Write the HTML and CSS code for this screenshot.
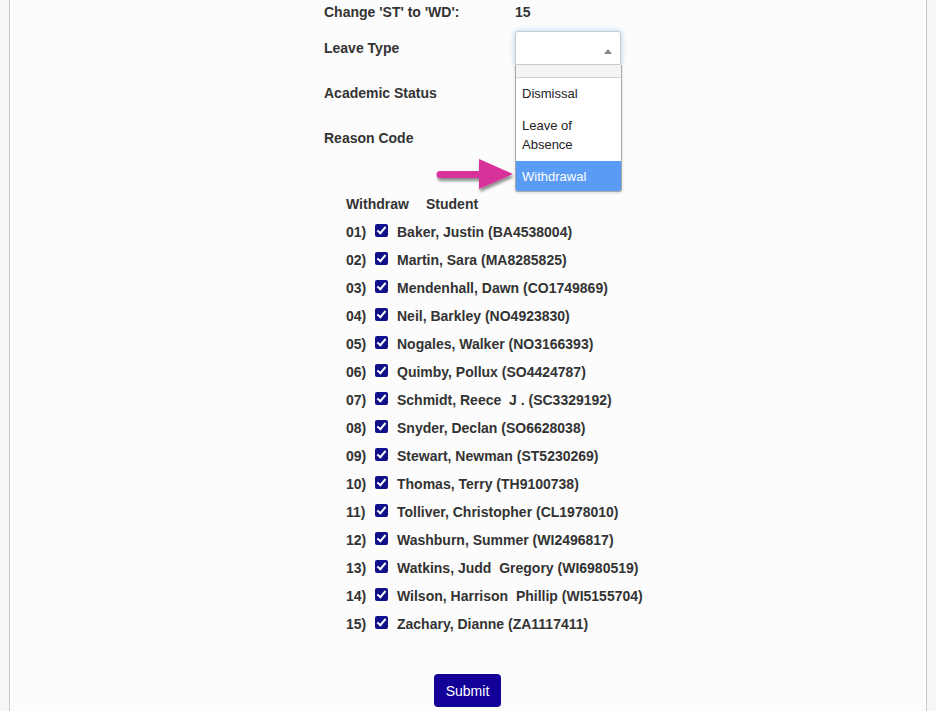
FILE: index.html
```html
<!DOCTYPE html>
<html>
<head>
<meta charset="utf-8">
<link rel="stylesheet" href="styles.css">
</head>
<body>
<div class="panel">
  <div class="form">
    <div class="row row-first">
      <div class="label">Change 'ST' to 'WD':</div>
      <div class="value">15</div>
    </div>
    <div class="row">
      <div class="label">Leave Type</div>
      <div class="select-wrap">
        <div class="select"><span class="caret"></span></div>
        <div class="options">
          <div class="opt opt-empty"></div>
          <div class="opt">Dismissal</div>
          <div class="opt">Leave of Absence</div>
          <div class="opt opt-sel">Withdrawal</div>
        </div>
        <svg class="pointer" width="84" height="40" viewBox="0 0 84 40">
          <defs>
            <filter id="sh" x="-20%" y="-30%" width="140%" height="170%">
              <feGaussianBlur in="SourceAlpha" stdDeviation="1.5"/>
              <feOffset dx="1" dy="3" result="b"/>
              <feComponentTransfer><feFuncA type="linear" slope="0.45"/></feComponentTransfer>
              <feMerge><feMergeNode/><feMergeNode in="SourceGraphic"/></feMerge>
            </filter>
          </defs>
          <path filter="url(#sh)" fill="#d8309a" d="M6 13 H45 V1 L79 16 L45 31 V20 H6 A3.5 3.5 0 0 1 6 13 Z"/>
        </svg>
      </div>
    </div>
    <div class="row">
      <div class="label">Academic Status</div>
    </div>
    <div class="row">
      <div class="label">Reason Code</div>
    </div>

    <div class="students">
      <div class="head"><span class="h1">Withdraw</span><span>Student</span></div>
      <div class="st"><span class="num">01)</span><span class="cb"></span><span>Baker, Justin (BA4538004)</span></div>
      <div class="st"><span class="num">02)</span><span class="cb"></span><span>Martin, Sara (MA8285825)</span></div>
      <div class="st"><span class="num">03)</span><span class="cb"></span><span>Mendenhall, Dawn (CO1749869)</span></div>
      <div class="st"><span class="num">04)</span><span class="cb"></span><span>Neil, Barkley (NO4923830)</span></div>
      <div class="st"><span class="num">05)</span><span class="cb"></span><span>Nogales, Walker (NO3166393)</span></div>
      <div class="st"><span class="num">06)</span><span class="cb"></span><span>Quimby, Pollux (SO4424787)</span></div>
      <div class="st"><span class="num">07)</span><span class="cb"></span><span>Schmidt, Reece&nbsp; J . (SC3329192)</span></div>
      <div class="st"><span class="num">08)</span><span class="cb"></span><span>Snyder, Declan (SO6628038)</span></div>
      <div class="st"><span class="num">09)</span><span class="cb"></span><span>Stewart, Newman (ST5230269)</span></div>
      <div class="st"><span class="num">10)</span><span class="cb"></span><span>Thomas, Terry (TH9100738)</span></div>
      <div class="st"><span class="num">11)</span><span class="cb"></span><span>Tolliver, Christopher (CL1978010)</span></div>
      <div class="st"><span class="num">12)</span><span class="cb"></span><span>Washburn, Summer (WI2496817)</span></div>
      <div class="st"><span class="num">13)</span><span class="cb"></span><span>Watkins, Judd&nbsp; Gregory (WI6980519)</span></div>
      <div class="st"><span class="num">14)</span><span class="cb"></span><span>Wilson, Harrison&nbsp; Phillip (WI5155704)</span></div>
      <div class="st"><span class="num">15)</span><span class="cb"></span><span>Zachary, Dianne (ZA1117411)</span></div>
    </div>

    <div class="actions"><button class="submit">Submit</button></div>
  </div>
</div>
</body>
</html>
```
FILE: styles.css
```css
* { box-sizing: border-box; }
html, body { margin: 0; padding: 0; }
body {
  background: #f6f6f6;
  font-family: "Liberation Sans", Arial, sans-serif;
  font-size: 14px;
  font-weight: bold;
  color: #333;
  overflow: hidden;
}
.panel {
  margin: 0 9px;
  min-height: 711px;
  background: #fcfcfc;
  border-left: 1px solid #c9c9c9;
  border-right: 1px solid #c9c9c9;
}
.form {
  padding-left: 314px;
}
.row {
  display: flex;
  align-items: center;
  height: 36px;
  margin-bottom: 9px;
}
.row-first {
  height: 24px;
  margin-bottom: 6px;
}
.label { width: 191px; }
.select-wrap { position: relative; }
.select {
  width: 106px;
  height: 34px;
  border: 1px solid #ccc;
  border-radius: 3px 3px 0 0;
  background: #fff;
  box-shadow: 0 0 6px rgba(102, 175, 233, 0.55);
  position: relative;
}
.caret {
  position: absolute;
  right: 8px;
  top: 17px;
  width: 0; height: 0;
  border-left: 4px solid transparent;
  border-right: 4px solid transparent;
  border-bottom: 5px solid #888;
}
.options {
  position: absolute;
  left: 0;
  top: 34px;
  width: 107px;
  background: #fff;
  border: 1px solid #a8a8a8;
  border-top: none;
  border-radius: 0 0 3px 3px;
  font-weight: normal;
  font-size: 13px;
  color: #222;
  box-shadow: 0 1px 3px rgba(0,0,0,0.15);
  z-index: 2;
  overflow: hidden;
}
.opt {
  padding: 6px 6px 7px;
  line-height: 19px;
}
.opt-empty {
  height: 13px;
  padding: 0;
  background: #f4f4f4;
  border-bottom: 1px solid #d4d4d4;
}
.opt-sel {
  background: #5a9bf6;
  color: #fff;
  padding: 6px 6px 5px;
}
.pointer {
  position: absolute;
  left: -81px;
  top: 127px;
  z-index: 3;
}
.students {
  margin-top: 34px;
  padding-left: 22px;
}
.head, .st {
  height: 28px;
  display: flex;
  align-items: center;
}
.head .h1 { width: 80px; }
.num { width: 29px; }
.cb {
  width: 13px;
  height: 13px;
  background: #10108a;
  border-radius: 2px;
  margin-right: 9px;
  margin-top: -4px;
  position: relative;
}
.cb::after {
  content: "";
  position: absolute;
  left: 4px;
  top: 1px;
  width: 3px;
  height: 7px;
  border: solid #fff;
  border-width: 0 2px 2px 0;
  transform: rotate(40deg);
}
.actions {
  margin-top: 36px;
  padding-left: 110px;
}
.submit {
  background: #120099;
  color: #fff;
  border: none;
  border-radius: 4px;
  width: 67px;
  height: 33px;
  font-family: "Liberation Sans", Arial, sans-serif;
  font-size: 14px;
  font-weight: normal;
  padding: 0;
}
```
